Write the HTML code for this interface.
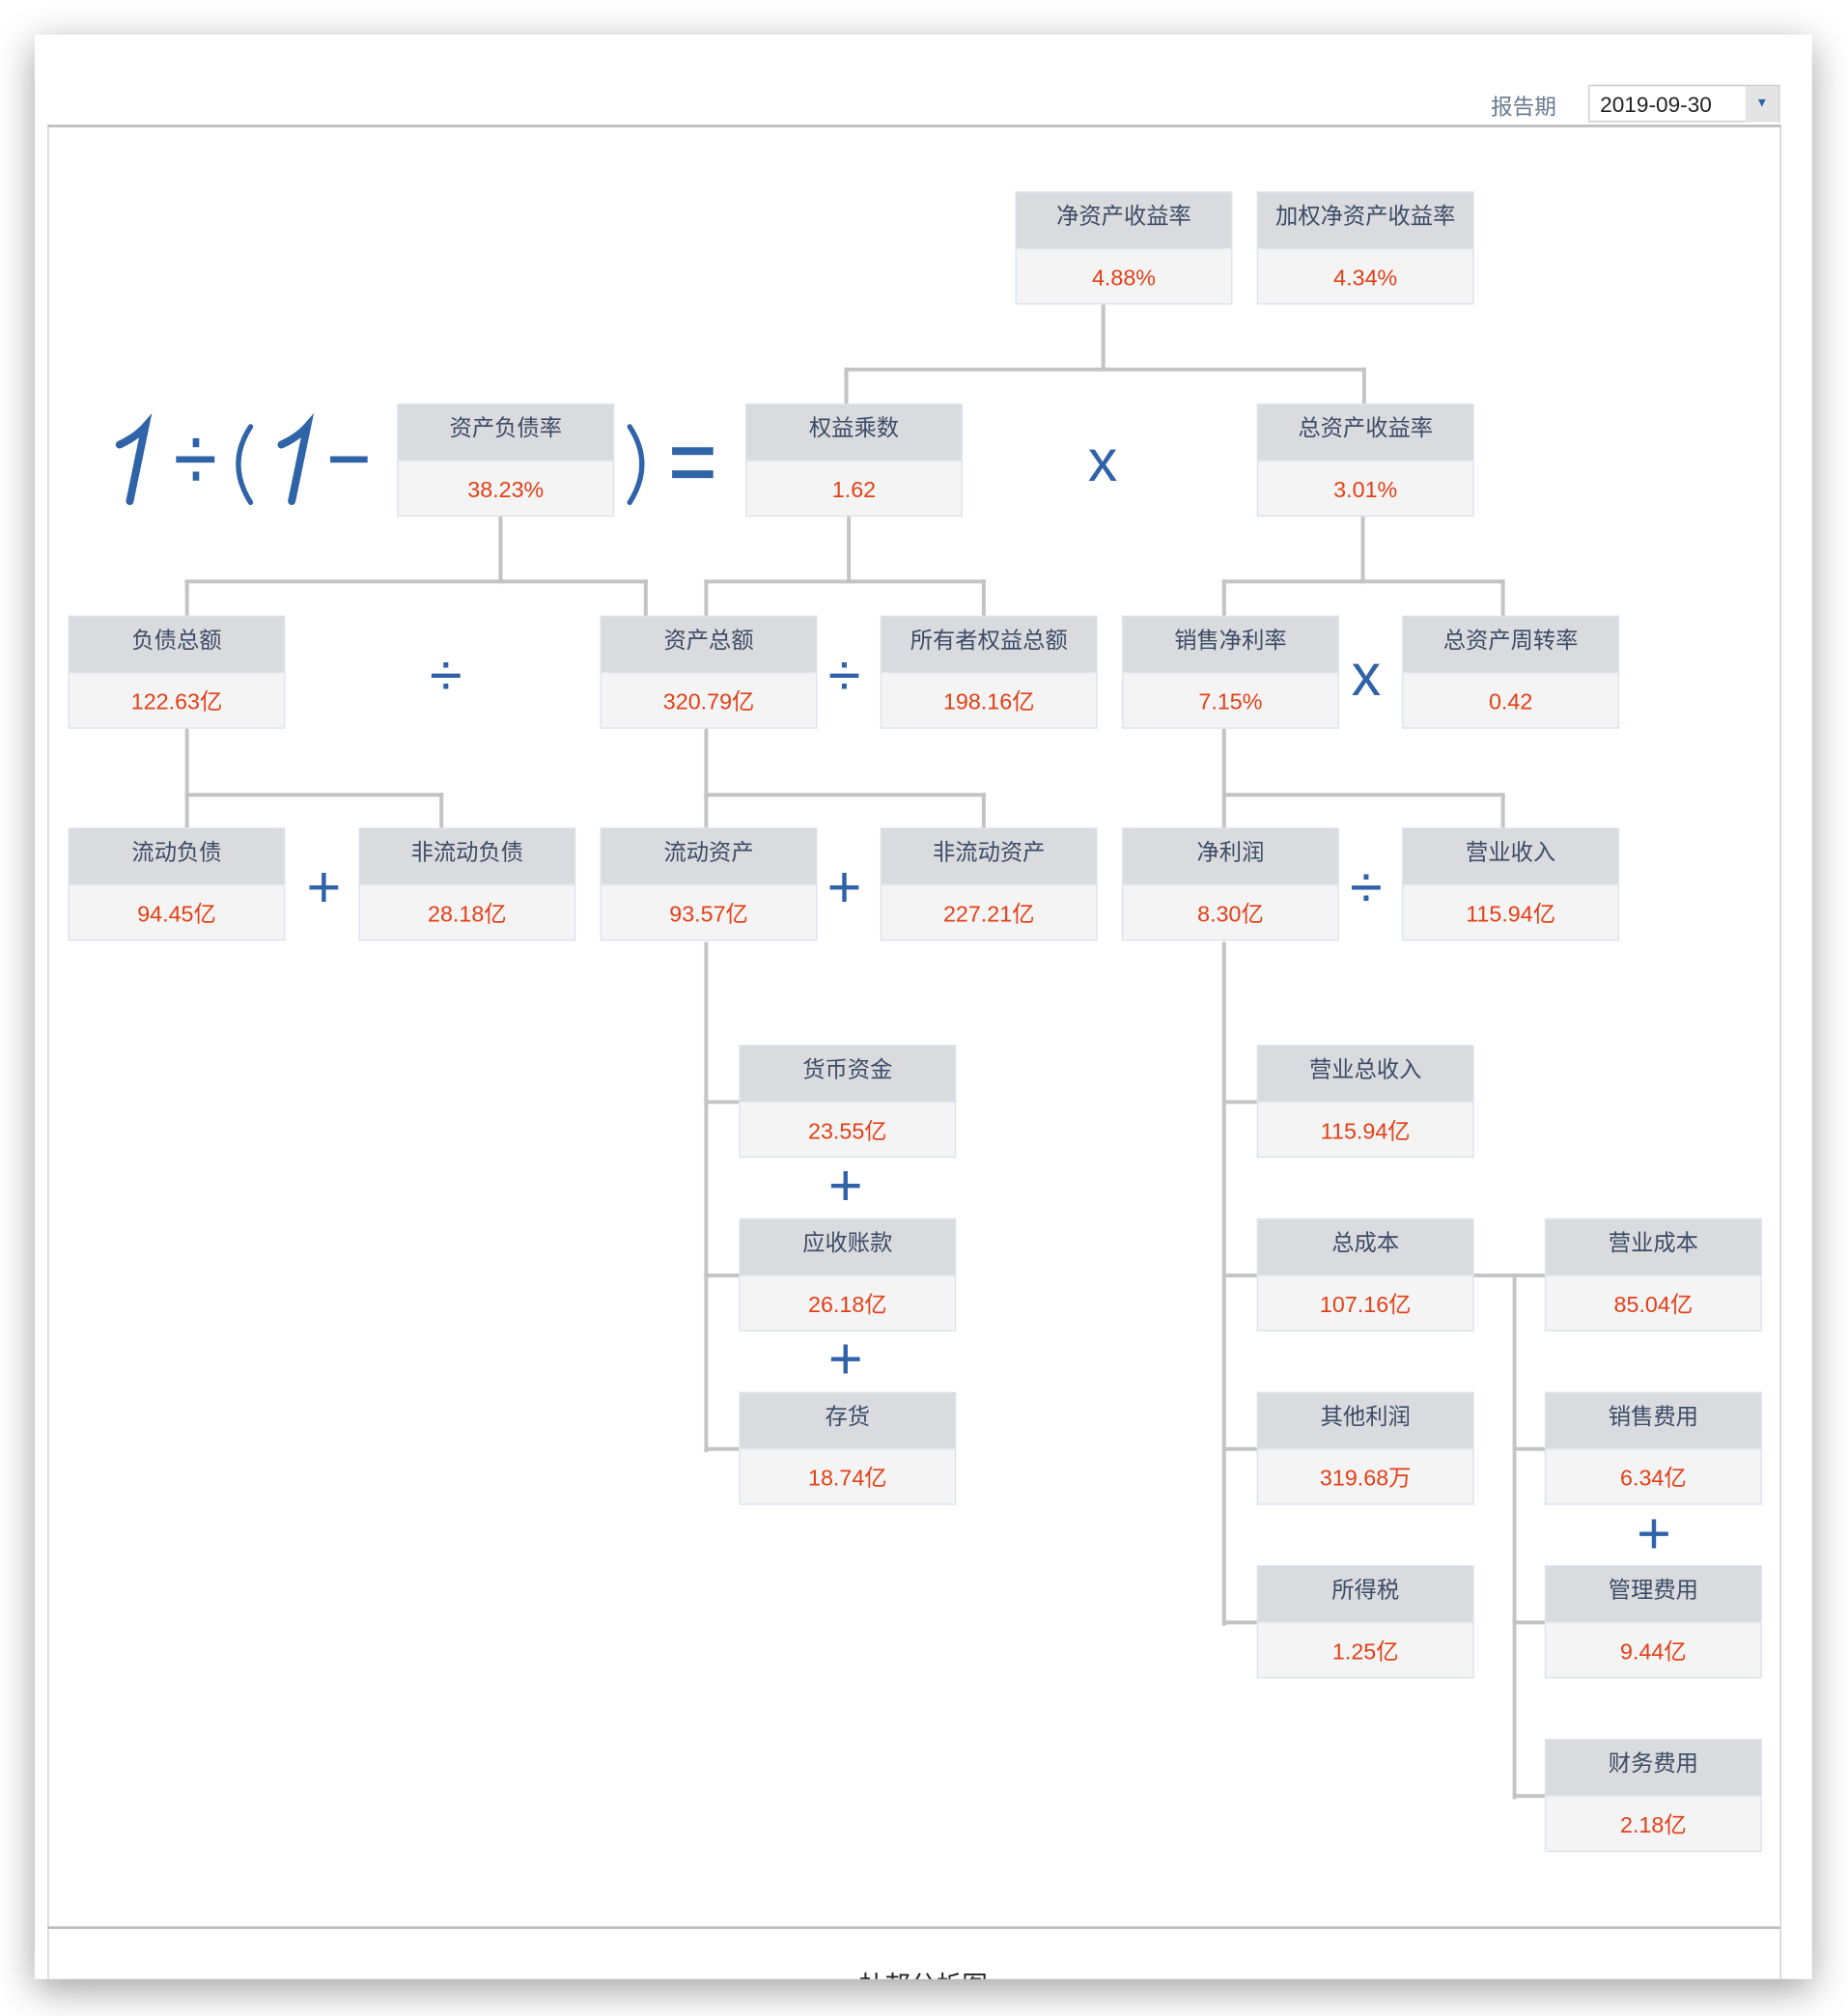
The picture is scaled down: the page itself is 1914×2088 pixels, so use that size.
<!DOCTYPE html>
<html><head><meta charset="utf-8"><style>
html,body{margin:0;padding:0;background:#fff;width:1914px;height:2088px;overflow:hidden}
#w{position:absolute;left:0;top:0;width:1438px;height:1568px;transform:scale(1.33102);transform-origin:0 0;font-family:"Liberation Sans","Noto Sans CJK SC",sans-serif}
.card{position:absolute;left:27px;top:27px;width:1383px;height:1513px;background:#fff;box-shadow:0 8px 28px rgba(0,0,0,.38);overflow:hidden}
.inner{position:absolute;left:10px;top:70px;width:1347px;height:1460px;border:1px solid #ccc;border-top:2px solid #bbb}
.sep{position:absolute;left:10px;top:1472px;width:1348px;height:2px;background:#bbb}
.b{position:absolute;width:167px;height:86px;border:1px solid #dbe2ec;background:#f4f4f4}
.b .h{height:43px;background:#d9dbde;color:#3d4b66;font-size:17.5px;text-align:center;line-height:37px;border-bottom:1px solid #e3e8ef}
.b .v{color:#e33f16;font-size:17.5px;text-align:center;line-height:44px}
.l{position:absolute;background:#c4c4c4}
.op{position:absolute;color:#2f62a8;font-size:46px;line-height:1;transform:translate(-50%,-50%);font-family:"Liberation Sans",sans-serif}
</style></head><body><div id="w">
<div class="card">
<div class="inner"></div>
<div class="sep"></div>
<div style="position:absolute;left:1133px;top:42px;color:#6a7a90;font-size:17px">报告期</div>
<div style="position:absolute;left:1209px;top:39px;width:149px;height:29px;border:1px solid #c8c8c8;background:#fff;font-size:17px;line-height:29px;color:#222;padding-left:8px;box-sizing:border-box">2019-09-30<div style="position:absolute;right:0;top:0;width:26px;height:28px;background:#e4e4e4;color:#2f62a8;font-size:10px;text-align:center;line-height:28px">▼</div></div>
<div style="position:absolute;left:0;width:1383px;top:1502px;text-align:center;color:#222;font-size:20px;">杜邦分析图</div>
</div>

<!-- lines -->
<div class="l" style="left:857px;top:237px;width:3px;height:52px"></div>
<div class="l" style="left:657px;top:286px;width:406px;height:3px"></div>
<div class="l" style="left:657px;top:286px;width:3px;height:28px"></div>
<div class="l" style="left:1060px;top:286px;width:3px;height:28px"></div>

<div class="l" style="left:388px;top:402px;width:3px;height:52px"></div>
<div class="l" style="left:144px;top:451px;width:360px;height:3px"></div>
<div class="l" style="left:144px;top:451px;width:3px;height:28px"></div>
<div class="l" style="left:501px;top:451px;width:3px;height:28px"></div>

<div class="l" style="left:659px;top:402px;width:3px;height:52px"></div>
<div class="l" style="left:548px;top:451px;width:219px;height:3px"></div>
<div class="l" style="left:548px;top:451px;width:3px;height:28px"></div>
<div class="l" style="left:764px;top:451px;width:3px;height:28px"></div>

<div class="l" style="left:1059px;top:402px;width:3px;height:52px"></div>
<div class="l" style="left:951px;top:451px;width:220px;height:3px"></div>
<div class="l" style="left:951px;top:451px;width:3px;height:28px"></div>
<div class="l" style="left:1168px;top:451px;width:3px;height:28px"></div>

<div class="l" style="left:144px;top:567px;width:3px;height:77px"></div>
<div class="l" style="left:144px;top:617px;width:201px;height:3px"></div>
<div class="l" style="left:342px;top:617px;width:3px;height:27px"></div>

<div class="l" style="left:548px;top:567px;width:3px;height:77px"></div>
<div class="l" style="left:548px;top:617px;width:219px;height:3px"></div>
<div class="l" style="left:764px;top:617px;width:3px;height:27px"></div>

<div class="l" style="left:951px;top:567px;width:3px;height:77px"></div>
<div class="l" style="left:951px;top:617px;width:220px;height:3px"></div>
<div class="l" style="left:1168px;top:617px;width:3px;height:27px"></div>

<div class="l" style="left:548px;top:733px;width:3px;height:397px"></div>
<div class="l" style="left:548px;top:856px;width:27px;height:3px"></div>
<div class="l" style="left:548px;top:991px;width:27px;height:3px"></div>
<div class="l" style="left:548px;top:1126px;width:27px;height:3px"></div>

<div class="l" style="left:951px;top:733px;width:3px;height:532px"></div>
<div class="l" style="left:951px;top:856px;width:27px;height:3px"></div>
<div class="l" style="left:951px;top:991px;width:27px;height:3px"></div>
<div class="l" style="left:951px;top:1126px;width:27px;height:3px"></div>
<div class="l" style="left:951px;top:1261px;width:27px;height:3px"></div>

<div class="l" style="left:1146px;top:991px;width:56px;height:3px"></div>
<div class="l" style="left:1177px;top:991px;width:3px;height:409px"></div>
<div class="l" style="left:1177px;top:1126px;width:25px;height:3px"></div>
<div class="l" style="left:1177px;top:1261px;width:25px;height:3px"></div>
<div class="l" style="left:1177px;top:1396px;width:25px;height:3px"></div>

<!-- boxes -->
<div class="b" style="left:790px;top:149px"><div class="h">净资产收益率</div><div class="v">4.88%</div></div>
<div class="b" style="left:978px;top:149px"><div class="h">加权净资产收益率</div><div class="v">4.34%</div></div>

<div class="b" style="left:309px;top:314px"><div class="h">资产负债率</div><div class="v">38.23%</div></div>
<div class="b" style="left:580px;top:314px"><div class="h">权益乘数</div><div class="v">1.62</div></div>
<div class="b" style="left:978px;top:314px"><div class="h">总资产收益率</div><div class="v">3.01%</div></div>

<div class="b" style="left:53px;top:479px"><div class="h">负债总额</div><div class="v">122.63亿</div></div>
<div class="b" style="left:467px;top:479px"><div class="h">资产总额</div><div class="v">320.79亿</div></div>
<div class="b" style="left:685px;top:479px"><div class="h">所有者权益总额</div><div class="v">198.16亿</div></div>
<div class="b" style="left:873px;top:479px"><div class="h">销售净利率</div><div class="v">7.15%</div></div>
<div class="b" style="left:1091px;top:479px"><div class="h">总资产周转率</div><div class="v">0.42</div></div>

<div class="b" style="left:53px;top:644px"><div class="h">流动负债</div><div class="v">94.45亿</div></div>
<div class="b" style="left:279px;top:644px"><div class="h">非流动负债</div><div class="v">28.18亿</div></div>
<div class="b" style="left:467px;top:644px"><div class="h">流动资产</div><div class="v">93.57亿</div></div>
<div class="b" style="left:685px;top:644px"><div class="h">非流动资产</div><div class="v">227.21亿</div></div>
<div class="b" style="left:873px;top:644px"><div class="h">净利润</div><div class="v">8.30亿</div></div>
<div class="b" style="left:1091px;top:644px"><div class="h">营业收入</div><div class="v">115.94亿</div></div>

<div class="b" style="left:575px;top:813px"><div class="h">货币资金</div><div class="v">23.55亿</div></div>
<div class="b" style="left:575px;top:948px"><div class="h">应收账款</div><div class="v">26.18亿</div></div>
<div class="b" style="left:575px;top:1083px"><div class="h">存货</div><div class="v">18.74亿</div></div>

<div class="b" style="left:978px;top:813px"><div class="h">营业总收入</div><div class="v">115.94亿</div></div>
<div class="b" style="left:978px;top:948px"><div class="h">总成本</div><div class="v">107.16亿</div></div>
<div class="b" style="left:978px;top:1083px"><div class="h">其他利润</div><div class="v">319.68万</div></div>
<div class="b" style="left:978px;top:1218px"><div class="h">所得税</div><div class="v">1.25亿</div></div>

<div class="b" style="left:1202px;top:948px"><div class="h">营业成本</div><div class="v">85.04亿</div></div>
<div class="b" style="left:1202px;top:1083px"><div class="h">销售费用</div><div class="v">6.34亿</div></div>
<div class="b" style="left:1202px;top:1218px"><div class="h">管理费用</div><div class="v">9.44亿</div></div>
<div class="b" style="left:1202px;top:1353px"><div class="h">财务费用</div><div class="v">2.18亿</div></div>

<!-- formula -->
<svg style="position:absolute;left:0;top:0" width="600" height="420" viewBox="0 0 600 420">
<g fill="none" stroke="#2f64a8" stroke-linecap="round">
<path d="M93 346 Q106 340 113 332 L101 390" stroke-width="6"/>
<path d="M219 346 Q232 340 239 332 L227 390" stroke-width="6"/>
<path d="M195 332 Q176 361 195 391" stroke-width="4"/>
<path d="M490 332 Q509 361 490 391" stroke-width="4"/>
</g>
<g fill="#2f64a8">
<rect x="137" y="355" width="30" height="5"/>
<rect x="150" y="341" width="5" height="7"/>
<rect x="150" y="367" width="5" height="7"/>
<rect x="257" y="355" width="29" height="5"/>
<rect x="523" y="348" width="32" height="6"/>
<rect x="523" y="366" width="32" height="6"/>
</g>
</svg>

<div class="op" style="left:858px;top:358px">x</div>
<div class="op" style="left:347px;top:525px">÷</div>
<div class="op" style="left:657px;top:525px">÷</div>
<div class="op" style="left:1063px;top:525px">x</div>
<div class="op" style="left:252px;top:690px">+</div>
<div class="op" style="left:657px;top:690px">+</div>
<div class="op" style="left:1063px;top:690px">÷</div>
<div class="op" style="left:658px;top:922px">+</div>
<div class="op" style="left:658px;top:1057px">+</div>
<div class="op" style="left:1287px;top:1193px">+</div>
</div></body></html>
